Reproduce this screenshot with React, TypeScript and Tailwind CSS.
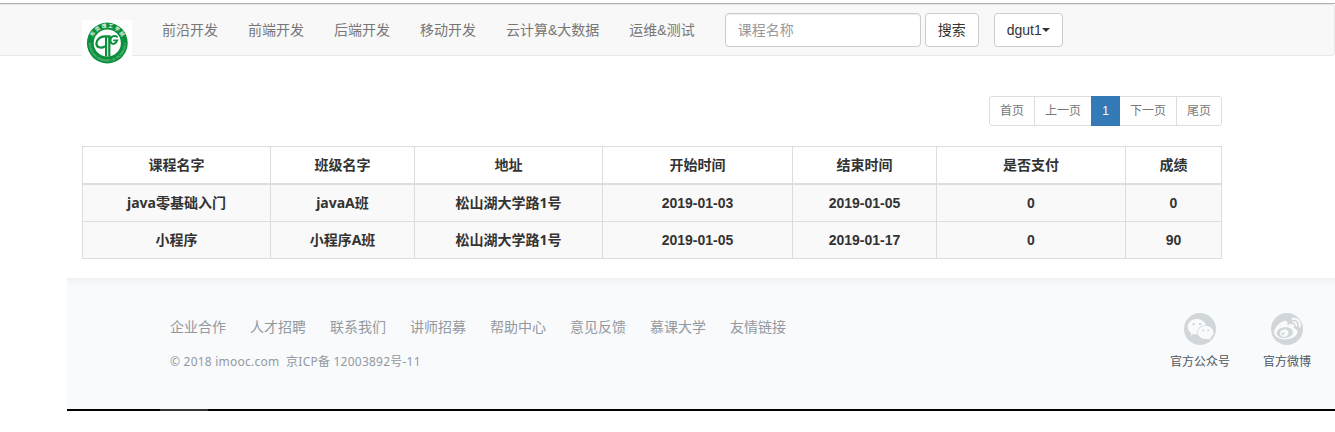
import React from "react";
import { FaWeixin, FaWeibo } from "react-icons/fa";

const navLinks = ["前沿开发", "前端开发", "后端开发", "移动开发", "云计算&大数据", "运维&测试"];

const headers = ["课程名字", "班级名字", "地址", "开始时间", "结束时间", "是否支付", "成绩"];

const rows = [
  ["java零基础入门", "javaA班", "松山湖大学路1号", "2019-01-03", "2019-01-05", "0", "0"],
  ["小程序", "小程序A班", "松山湖大学路1号", "2019-01-05", "2019-01-17", "0", "90"],
];

const footerLinks = ["企业合作", "人才招聘", "联系我们", "讲师招募", "帮助中心", "意见反馈", "慕课大学", "友情链接"];

function Logo() {
  return (
    <svg viewBox="0 0 50 50" className="block h-[50px] w-[50px]">
      <defs>
        <path id="ring-top" d="M9.8 23 A15.5 15.5 0 0 1 40.8 23" />
        <path id="ring-bottom" d="M6.8 21 A18.6 18.6 0 1 0 43.8 21" />
      </defs>
      <rect width="50" height="50" fill="#fff" />
      <circle cx="25.3" cy="23" r="20.4" fill="#0a8f3c" />
      <circle cx="25.3" cy="23" r="13.6" fill="#fff" />
      <text fill="#e6f5ea" fontSize="4.8" fontWeight="700" fontFamily="Noto Sans CJK SC, sans-serif" textAnchor="middle">
        <textPath href="#ring-top" startOffset="50%" textLength="36">东莞理工学院</textPath>
      </text>
      <text fill="#a9d8b8" fontSize="3" fontFamily="Liberation Sans, sans-serif" textAnchor="middle">
        <textPath href="#ring-bottom" startOffset="50%" textLength="58">DONGGUAN UNIVERSITY OF TECHNOLOGY</textPath>
      </text>
      <g fill="none" stroke="#0a8f3c">
        <path d="M28.5 16.4 H23.5 C18.5 16 14.4 19.6 14.4 23.4 C14.4 27.4 18.8 28.8 23 26.2" strokeWidth="2.2" />
        <path d="M24.1 16 V36.4 M27.3 16 V36.4" strokeWidth="2.2" />
        <path d="M35.6 17.2 C32 14.8 28.4 16.4 28.4 20.4 C28.6 24.8 33.2 25.4 35.2 20.4 H31.2" strokeWidth="1.9" />
      </g>
    </svg>
  );
}

function Navbar() {
  return (
    <nav className="flex h-[52px] rounded-r-[4px] border border-l-0 border-[#e7e7e7] bg-[#f8f8f8] pl-[82px] text-[14px] leading-5">
      <div className="mt-[15px] mr-[15px] h-[50px] w-[50px] shrink-0">
        <Logo />
      </div>
      <ul className="flex">
        {navLinks.map((label) => (
          <li key={label} className="px-[15px] pt-[15px] whitespace-nowrap text-[#777]">
            {label}
          </li>
        ))}
      </ul>
      <form className="ml-[15px] flex gap-1 pt-2">
        <input
          type="text"
          placeholder="课程名称"
          className="h-[34px] w-[196px] rounded-[4px] border border-[#ccc] bg-white px-3 shadow-[inset_0_1px_1px_rgba(0,0,0,0.075)] outline-none placeholder:text-[#999]"
        />
        <button type="button" className="h-[34px] w-[54px] rounded-[4px] border border-[#ccc] bg-white whitespace-nowrap text-[#333]">
          搜索
        </button>
      </form>
      <button
        type="button"
        className="mt-2 ml-[15px] flex h-[34px] w-[69px] items-center justify-center rounded-[4px] border border-[#ccc] bg-white text-[#333]"
      >
        dgut1
        <span className="h-0 w-0 border-x-4 border-t-4 border-x-transparent border-t-[#333]" />
      </button>
    </nav>
  );
}

function Pagination() {
  const item = "flex items-center justify-center border-r border-[#ddd]";
  return (
    <ul className="flex h-[30px] w-[233px] rounded-[3px] border border-[#ddd] bg-white text-[12px] whitespace-nowrap text-[#777]">
      <li className={`${item} w-[45px]`}>首页</li>
      <li className="flex w-[56px] items-center justify-center">上一页</li>
      <li className="-my-px flex w-[29px] items-center justify-center bg-[#337ab7] text-white">1</li>
      <li className={`${item} w-[57px]`}>下一页</li>
      <li className="flex w-[44px] items-center justify-center">尾页</li>
    </ul>
  );
}

function CourseTable() {
  return (
    <table className="w-[1140px] table-fixed border-separate border-spacing-0 border-t border-l border-[#ddd] text-center text-[14px] leading-5 font-bold text-[#333]">
      <colgroup>
        <col className="w-[188px]" />
        <col className="w-[144px]" />
        <col className="w-[188px]" />
        <col className="w-[190px]" />
        <col className="w-[144px]" />
        <col className="w-[189px]" />
        <col className="w-[96px]" />
      </colgroup>
      <thead>
        <tr>
          {headers.map((h) => (
            <th key={h} className="h-[38px] border-r border-b-2 border-[#ddd] p-0">
              {h}
            </th>
          ))}
        </tr>
      </thead>
      <tbody>
        {rows.map((row, r) => (
          <tr key={r} className="bg-[#f9f9f9]">
            {row.map((cell, c) => (
              <td
                key={c}
                className={
                  c < 3
                    ? "h-[37px] border-r border-b border-[#ddd] p-0 font-['Noto_Sans','Noto_Sans_CJK_SC',sans-serif]"
                    : "h-[37px] border-r border-b border-[#ddd] p-0"
                }
              >
                {cell}
              </td>
            ))}
          </tr>
        ))}
      </tbody>
    </table>
  );
}

function Footer() {
  return (
    <footer className="mt-[19px] ml-[67px]">
      <div className="flex h-[131px] justify-between bg-[#f8fafc] bg-[linear-gradient(to_bottom,#eff1f5_0,#f8fafc_8px)] font-['Noto_Sans','Noto_Sans_CJK_SC',sans-serif]">
        <div className="pt-[39px] pl-[103px] text-[#93999f]">
          <ul className="flex gap-6 text-[14px] leading-5 whitespace-nowrap">
            {footerLinks.map((label) => (
              <li key={label}>{label}</li>
            ))}
          </ul>
          <p className="mt-[15px] text-[12px] leading-5 tracking-[0.23px] whitespace-pre">© 2018 imooc.com  京ICP备 12003892号-11</p>
        </div>
        <div className="flex pt-[35px] text-[12px] leading-5 whitespace-nowrap text-[#4d555d]">
          <div className="mr-[33px] flex w-[60px] flex-col items-center">
            <span className="flex h-8 w-8 items-center justify-center rounded-full bg-[#d0d6d9] text-[#f8fafc]">
              <FaWeixin size={27} />
            </span>
            <span className="mt-[7px]">官方公众号</span>
          </div>
          <div className="mr-[24px] flex w-[48px] flex-col items-center">
            <span className="flex h-8 w-8 items-center justify-center rounded-full bg-[#d0d6d9] text-[#f8fafc]">
              <FaWeibo size={27} />
            </span>
            <span className="mt-[7px]">官方微博</span>
          </div>
        </div>
      </div>
      <div className="h-[2px] bg-black pl-[93px]">
        <div className="h-[2px] w-12 bg-[#333]" />
      </div>
    </footer>
  );
}

export default function App() {
  return (
    <div
      lang="zh-CN"
      className="h-[432px] w-[1335px] overflow-hidden bg-white pt-[3px] font-['Liberation_Sans','Noto_Sans_CJK_SC',sans-serif]"
    >
      <div className="h-px bg-[#b2b2b2]" />
      <Navbar />
      <main className="flex w-[1222px] flex-col items-end pt-10">
        <Pagination />
        <div className="mt-5">
          <CourseTable />
        </div>
      </main>
      <Footer />
    </div>
  );
}
